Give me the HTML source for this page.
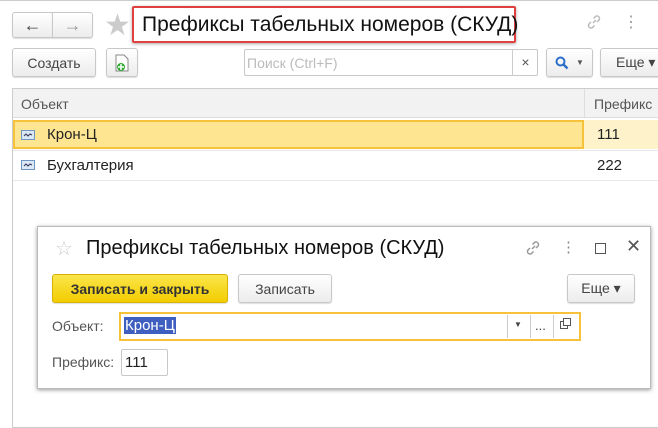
<!DOCTYPE html><html><head><meta charset="utf-8"><style>
*{box-sizing:border-box}body{margin:0;width:658px;height:415px;background:#fff;font-family:"Liberation Sans",sans-serif;position:relative;overflow:hidden;color:#333}
.a{position:absolute}
.btn{position:absolute;border:1px solid #c8c8c8;border-radius:3px;background:linear-gradient(#fff,#ececec);font-size:14px;color:#444;display:flex;align-items:center;justify-content:center;box-shadow:0 1px 1px #ddd}
</style></head><body>
<div class="a" style="left:0;top:0;width:658px;height:1px;background:#ccc"></div>
<div class="btn" style="left:12px;top:12px;width:41px;height:26px;border-radius:3px 0 0 3px;font-size:18px">&#8592;</div>
<div class="btn" style="left:52px;top:12px;width:41px;height:26px;border-radius:0 3px 3px 0;font-size:18px;color:#999">&#8594;</div>
<div class="a" style="left:104px;top:8px;font-size:30px;color:#ccc">&#9733;</div>
<div class="a" style="left:132px;top:6px;width:384px;height:37px;border:2px solid #e0403f;border-radius:2px;box-shadow:0 1px 3px #aaa"></div>
<div class="a" style="left:142px;top:13px;font-size:21px;color:#111">Префиксы табельных номеров (СКУД)</div>
<svg class="a" style="left:585px;top:13px" width="18" height="18"><path d="M8 10l3-3M6 9l-2 2a2.5 2.5 0 0 0 3.5 3.5l2-2M12 9l2-2a2.5 2.5 0 0 0-3.5-3.5l-2 2" stroke="#bbb" stroke-width="1.5" fill="none"/></svg>
<div class="a" style="left:623px;top:12px;font-size:16px;color:#999">&#8942;</div>
<div class="btn" style="left:12px;top:48px;width:84px;height:29px">Создать</div>
<div class="btn" style="left:106px;top:48px;width:32px;height:29px"><svg width="14" height="18"><path d="M1 1h8l4 4v12H1z" fill="#fff" stroke="#888"/><circle cx="6" cy="13" r="4" fill="#3a3"/><path d="M6 10v6M3 13h6" stroke="#fff" stroke-width="1.5"/></svg></div>
<div class="a" style="left:244px;top:49px;width:294px;height:27px;border:1px solid #c8c8c8;border-radius:2px;font-size:14px;color:#bbb;padding:5px 2px">Поиск (Ctrl+F)</div>
<div class="a" style="left:512px;top:49px;width:26px;height:27px;border-left:1px solid #ccc;font-size:14px;color:#555;text-align:center;line-height:26px">×</div>
<div class="btn" style="left:546px;top:48px;width:47px;height:29px"><svg width="14" height="14"><circle cx="5.5" cy="5.5" r="4" stroke="#2a6fc9" stroke-width="2" fill="none"/><path d="M8.5 8.5l4 4" stroke="#2a6fc9" stroke-width="2.5"/></svg><span style="color:#555;font-size:8px;margin-left:7px">▼</span></div>
<div class="btn" style="left:600px;top:48px;width:70px;height:29px;justify-content:flex-start;padding-left:15px">Еще ▾</div>
<div class="a" style="left:12px;top:88px;width:660px;height:340px;border:1px solid #ccc;border-right:none"></div>
<div class="a" style="left:13px;top:89px;width:660px;height:29px;background:#f2f2f2;border-bottom:1px solid #ddd"></div>
<div class="a" style="left:584px;top:89px;width:1px;height:29px;background:#ddd"></div>
<div class="a" style="left:21px;top:96px;font-size:14px;color:#555">Объект</div>
<div class="a" style="left:594px;top:96px;font-size:14px;color:#555">Префикс</div>
<div class="a" style="left:13px;top:120px;width:571px;height:29px;background:#fde592;border:2px solid #f5c23a"></div>
<div class="a" style="left:584px;top:120px;width:80px;height:29px;background:#fdf2ca"></div>
<div class="a" style="left:13px;top:180px;width:660px;height:1px;background:#e8e8e8"></div>
<div class="a" style="left:13px;top:150px;width:660px;height:1px;background:#e8e8e8"></div>
<svg class="a" style="left:21px;top:130px" width="14" height="10"><rect x=".5" y=".5" width="13" height="9" fill="#dbe8f5" stroke="#6f95c0"/><path d="M3 6l2-2 2 2 2-2 2 1" stroke="#335" fill="none"/></svg>
<svg class="a" style="left:21px;top:160px" width="14" height="10"><rect x=".5" y=".5" width="13" height="9" fill="#dbe8f5" stroke="#6f95c0"/><path d="M3 6l2-2 2 2 2-2 2 1" stroke="#335" fill="none"/></svg>
<div class="a" style="left:47px;top:126px;font-size:15px;color:#222">Крон-Ц</div>
<div class="a" style="left:597px;top:126px;font-size:15px;color:#222">111</div>
<div class="a" style="left:47px;top:157px;font-size:15px;color:#222">Бухгалтерия</div>
<div class="a" style="left:597px;top:157px;font-size:15px;color:#222">222</div>
<div class="a" style="left:37px;top:226px;width:614px;height:163px;background:#fff;border:1px solid #bbb;box-shadow:0 1px 4px #999"></div>
<div class="a" style="left:55px;top:236px;font-size:20px;color:#ccc">&#9734;</div>
<div class="a" style="left:86px;top:237px;font-size:20px;color:#111">Префиксы табельных номеров (СКУД)</div>
<svg class="a" style="left:524px;top:239px" width="18" height="18"><path d="M8 10l3-3M6 9l-2 2a2.5 2.5 0 0 0 3.5 3.5l2-2M12 9l2-2a2.5 2.5 0 0 0-3.5-3.5l-2 2" stroke="#999" stroke-width="1.5" fill="none"/></svg>
<div class="a" style="left:561px;top:238px;font-size:15px;color:#888">&#8942;</div>
<div class="a" style="left:595px;top:243px;width:11px;height:11px;border:1.5px solid #555"></div>
<div class="a" style="left:626px;top:236px;font-size:18px;color:#555">✕</div>
<div class="btn" style="left:52px;top:274px;width:176px;height:29px;background:linear-gradient(#fbe54a,#f2cd00);border-color:#d8b300;font-weight:bold;color:#333">Записать и закрыть</div>
<div class="btn" style="left:238px;top:274px;width:94px;height:29px">Записать</div>
<div class="btn" style="left:567px;top:274px;width:68px;height:29px">Еще ▾</div>
<div class="a" style="left:52px;top:318px;font-size:14px;color:#555">Объект:</div>
<div class="a" style="left:119px;top:312px;width:462px;height:29px;border:2px solid #f5c23a"></div>
<div class="a" style="left:124px;top:317px;font-size:15px;background:#3f5fc0;color:#fff;padding:0 1px">Крон-Ц</div>
<div class="a" style="left:507px;top:315px;width:1px;height:23px;background:#ccc"></div>
<div class="a" style="left:530px;top:315px;width:1px;height:23px;background:#ccc"></div>
<div class="a" style="left:553px;top:315px;width:1px;height:23px;background:#ccc"></div>
<div class="a" style="left:514px;top:320px;font-size:8px;color:#444">▼</div>
<div class="a" style="left:535px;top:318px;font-size:13px;color:#444">...</div>
<div class="a" style="left:560px;top:321px;width:8px;height:8px;border:1px solid #555"></div>
<div class="a" style="left:563px;top:318px;width:8px;height:8px;border:1px solid #555;background:#fff"></div>
<div class="a" style="left:52px;top:354px;font-size:14px;color:#555">Префикс:</div>
<div class="a" style="left:121px;top:349px;width:47px;height:27px;border:1px solid #c8c8c8;border-radius:2px;font-size:15px;color:#222;padding:4px 3px">111</div>
</body></html>
